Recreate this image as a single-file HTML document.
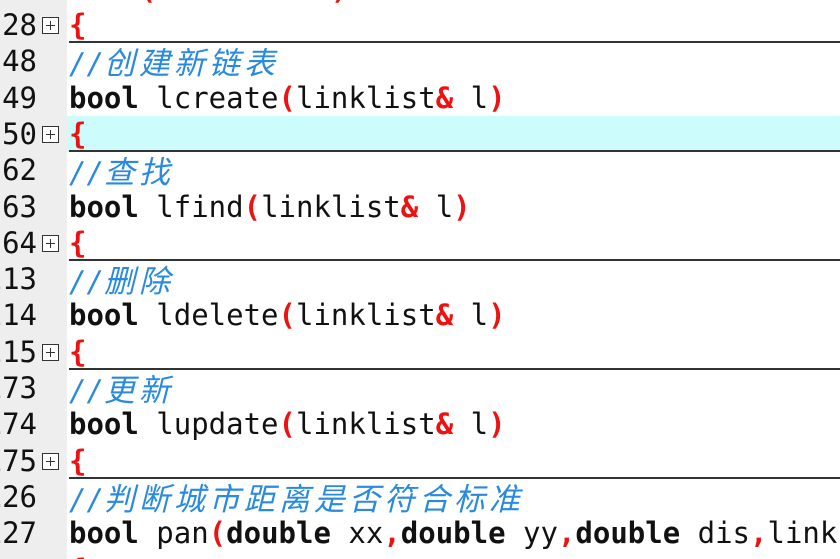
<!DOCTYPE html>
<html><head><meta charset="utf-8"><style>
html,body{margin:0;width:840px;height:559px;overflow:hidden;background:#fff}
body{position:relative;font-family:"DejaVu Sans Mono","Liberation Mono","Noto Sans CJK SC",monospace;}
#g{position:absolute;left:0;top:0;width:67px;height:559px;background:#eeeeee}
.r{position:absolute;left:0;width:840px;height:36.3px;line-height:36px;font-size:29px;white-space:pre}
.n{position:absolute;right:803px;text-align:right;font-size:29px;color:#111}
.f{position:absolute;left:42px;top:10px;width:17px;height:17px;border:1px solid #333;box-sizing:border-box;background:#fff}
.f:before{content:"";position:absolute;left:3px;right:3px;top:7px;height:1px;background:#333}
.f:after{content:"";position:absolute;top:3px;bottom:3px;left:7px;width:1px;background:#333}
.c{position:absolute;left:69px;top:0;color:#111}
.u{position:absolute;left:69px;right:0;bottom:0;height:2px;background:#333}
.k{font-weight:bold}
.p{color:#ee1111;font-weight:bold}
.m{color:#2a8ae0;font-style:italic}
.m b{font-weight:normal;font-family:"Noto Sans CJK SC",sans-serif;font-size:31px;letter-spacing:4px}
.hl{position:absolute;left:67px;right:0;top:0;bottom:0;background:#ccfcfc}
.clip{overflow:hidden}
</style></head><body>
<div id="g"></div>
<div class="r clip" style="top:0;height:7px"><span class="c" style="top:-29.3px"><span class="p">    (          )</span></span></div>
<div class="r" style="top:7px"><span class="n">28</span><span class="f"></span><span class="c"><span class="p">{</span></span><span class="u"></span></div>
<div class="r" style="top:43.3px"><span class="n">48</span><span class="c m">//<b>创建新链表</b></span></div>
<div class="r" style="top:79.6px"><span class="n">49</span><span class="c"><span class="k">bool</span> lcreate<span class="p">(</span>linklist<span class="p">&amp;</span> l<span class="p">)</span></span></div>
<div class="r" style="top:115.9px"><span class="hl"></span><span class="n">50</span><span class="f"></span><span class="c"><span class="p">{</span></span><span class="u"></span></div>
<div class="r" style="top:152.2px"><span class="n">62</span><span class="c m">//<b>查找</b></span></div>
<div class="r" style="top:188.5px"><span class="n">63</span><span class="c"><span class="k">bool</span> lfind<span class="p">(</span>linklist<span class="p">&amp;</span> l<span class="p">)</span></span></div>
<div class="r" style="top:224.8px"><span class="n">64</span><span class="f"></span><span class="c"><span class="p">{</span></span><span class="u"></span></div>
<div class="r" style="top:261.1px"><span class="n">113</span><span class="c m">//<b>删除</b></span></div>
<div class="r" style="top:297.4px"><span class="n">114</span><span class="c"><span class="k">bool</span> ldelete<span class="p">(</span>linklist<span class="p">&amp;</span> l<span class="p">)</span></span></div>
<div class="r" style="top:333.7px"><span class="n">115</span><span class="f"></span><span class="c"><span class="p">{</span></span><span class="u"></span></div>
<div class="r" style="top:370px"><span class="n">173</span><span class="c m">//<b>更新</b></span></div>
<div class="r" style="top:406.3px"><span class="n">174</span><span class="c"><span class="k">bool</span> lupdate<span class="p">(</span>linklist<span class="p">&amp;</span> l<span class="p">)</span></span></div>
<div class="r" style="top:442.6px"><span class="n">175</span><span class="f"></span><span class="c"><span class="p">{</span></span><span class="u"></span></div>
<div class="r" style="top:478.9px"><span class="n">126</span><span class="c m">//<b>判断城市距离是否符合标准</b></span></div>
<div class="r" style="top:515.2px;height:36px;overflow:hidden"><span class="n">127</span><span class="c"><span class="k">bool</span> pan<span class="p">(</span><span class="k">double</span> xx<span class="p">,</span><span class="k">double</span> yy<span class="p">,</span><span class="k">double</span> dis<span class="p">,</span>link</span></div>
<div class="r clip" style="top:551.5px;height:7.5px"><span class="c"><span class="p">{</span></span></div>
</body></html>
